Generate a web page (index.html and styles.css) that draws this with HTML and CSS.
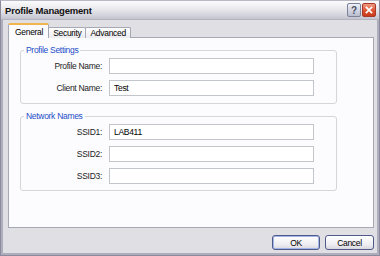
FILE: index.html
```html
<!DOCTYPE html>
<html>
<head>
<meta charset="utf-8">
<link rel="stylesheet" href="styles.css">
</head>
<body>
<div class="window">
  <div class="titlebar">
    <span class="title">Profile Management</span>
    <div class="tb-btns">
      <span class="tb help">?</span>
      <span class="tb close"><svg width="14" height="14" viewBox="0 0 14 14"><path d="M4 4 L10 10 M10 4 L4 10" stroke="#fff" stroke-width="2" stroke-linecap="square"/></svg></span>
    </div>
  </div>
  <div class="content">
    <div class="tabs">
      <div class="tab active">General</div>
      <div class="tab">Security</div>
      <div class="tab">Advanced</div>
    </div>
    <div class="panel">
      <fieldset class="group g1">
        <legend>Profile Settings</legend>
        <div class="row"><label>Profile Name:</label><input type="text" value=""></div>
        <div class="row"><label>Client Name:</label><input type="text" value="Test"></div>
      </fieldset>
      <fieldset class="group g2">
        <legend>Network Names</legend>
        <div class="row"><label>SSID1:</label><input type="text" value="LAB411"></div>
        <div class="row"><label>SSID2:</label><input type="text" value=""></div>
        <div class="row"><label>SSID3:</label><input type="text" value=""></div>
      </fieldset>
    </div>
    <div class="buttons">
      <button class="btn default">OK</button>
      <button class="btn">Cancel</button>
    </div>
  </div>
</div>
</body>
</html>
```
FILE: styles.css
```css
* { box-sizing: border-box; }
html, body { margin: 0; padding: 0; }
body {
  width: 380px;
  height: 256px;
  font-family: "Liberation Sans", Arial, sans-serif;
  font-size: 8.5px;
  letter-spacing: -0.3px;
  color: #000;
  background: #e0dfe3;
  overflow: hidden;
}
.window {
  width: 380px;
  height: 256px;
  display: flex;
  flex-direction: column;
  border: 1px solid #8c8b9c;
  border-top-color: #b9b9c6;
  background: #e0dfe3;
}
.titlebar {
  height: 19px;
  flex: none;
  display: flex;
  align-items: center;
  justify-content: space-between;
  padding: 0 3px 0 4px;
  background: linear-gradient(#fbfbfc 0%, #ebebef 40%, #d6d6df 75%, #c4c4d0 100%);
  border-bottom: 1px solid #b4b3c2;
}
.title {
  font-weight: bold;
  font-size: 9.5px;
  letter-spacing: -0.2px;
  color: #111;
  margin-top: 1px;
}
.tb-btns { display: flex; gap: 1px; }
.tb {
  width: 14px;
  height: 14px;
  border-radius: 2px;
  display: flex;
  align-items: center;
  justify-content: center;
}
.help {
  background: linear-gradient(#eef0f6, #b9bdce);
  border: 1px solid #7d8299;
  color: #4a4f66;
  font-weight: bold;
  font-size: 10px;
  letter-spacing: 0;
}
.close {
  background: linear-gradient(#f19a83, #dc4d2a 60%, #c83a1a);
  border: 1px solid #a8392a;
}
.content {
  flex: 1;
  display: flex;
  flex-direction: column;
  padding: 3px 3px 3px 2px;
  border-left: 2px solid #aeadbd;
  border-right: 2px solid #aeadbd;
  border-bottom: 2px solid #aeadbd;
}
.tabs {
  display: flex;
  align-items: flex-end;
  height: 14px;
  padding-left: 3px;
  position: relative;
  z-index: 1;
}
.tab {
  height: 11px;
  padding: 0 4px;
  border: 1px solid #a6a8b4;
  border-bottom: none;
  border-radius: 2px 2px 0 0;
  background: linear-gradient(#fefefe, #ecebf0);
  display: flex;
  align-items: center;
  margin-bottom: -1px;
}
.tab + .tab { margin-left: -1px; }
.tab.active {
  height: 15px;
  padding: 0 5px 0 6px;
  background: #fcfcfe;
  border-top: 2px solid #f2b54e;
  margin-bottom: -1px;
}
.panel {
  flex: 1;
  margin-left: 3px;
  background: #fcfcfe;
  border: 1px solid #a6a8b4;
  padding: 7px 36px 0 11px;
  display: flex;
  flex-direction: column;
  gap: 7px;
}
.group {
  margin: 0;
  border: 1px solid #d6d6da;
  border-radius: 3px;
  padding: 3px 0 7px 0;
  display: flex;
  flex-direction: column;
  gap: 6px;
}
.g2 { padding-bottom: 6px; }
legend {
  color: #1c4cc7;
  padding: 0 2px;
  margin-left: 3px;
  line-height: 10px;
}
.row {
  display: flex;
  align-items: center;
  gap: 7px;
}
label {
  width: 81px;
  text-align: right;
  color: #222;
}
input {
  width: 205px;
  height: 16px;
  margin: 0;
  padding: 0 4px;
  border: 1px solid #c3c5cc;
  background: #fff;
  font-family: "Liberation Sans", Arial, sans-serif;
  font-size: 8.5px;
  letter-spacing: -0.3px;
  color: #000;
  outline: none;
}
.buttons {
  display: flex;
  justify-content: flex-end;
  gap: 5px;
  padding-top: 7px;
  padding-right: 0;
}
.btn {
  height: 15px;
  width: 48px;
  margin: 0;
  padding: 0;
  border: 1px solid #50598a;
  border-radius: 3px;
  background: linear-gradient(#ffffff, #ecebf0 70%, #d8d7e0);
  font-family: "Liberation Sans", Arial, sans-serif;
  font-size: 8.5px;
  letter-spacing: -0.3px;
  color: #000;
}
.btn.default {
  box-shadow: inset 0 0 0 1px #9fb6e6;
}
.btn + .btn { width: 49px; }
```
